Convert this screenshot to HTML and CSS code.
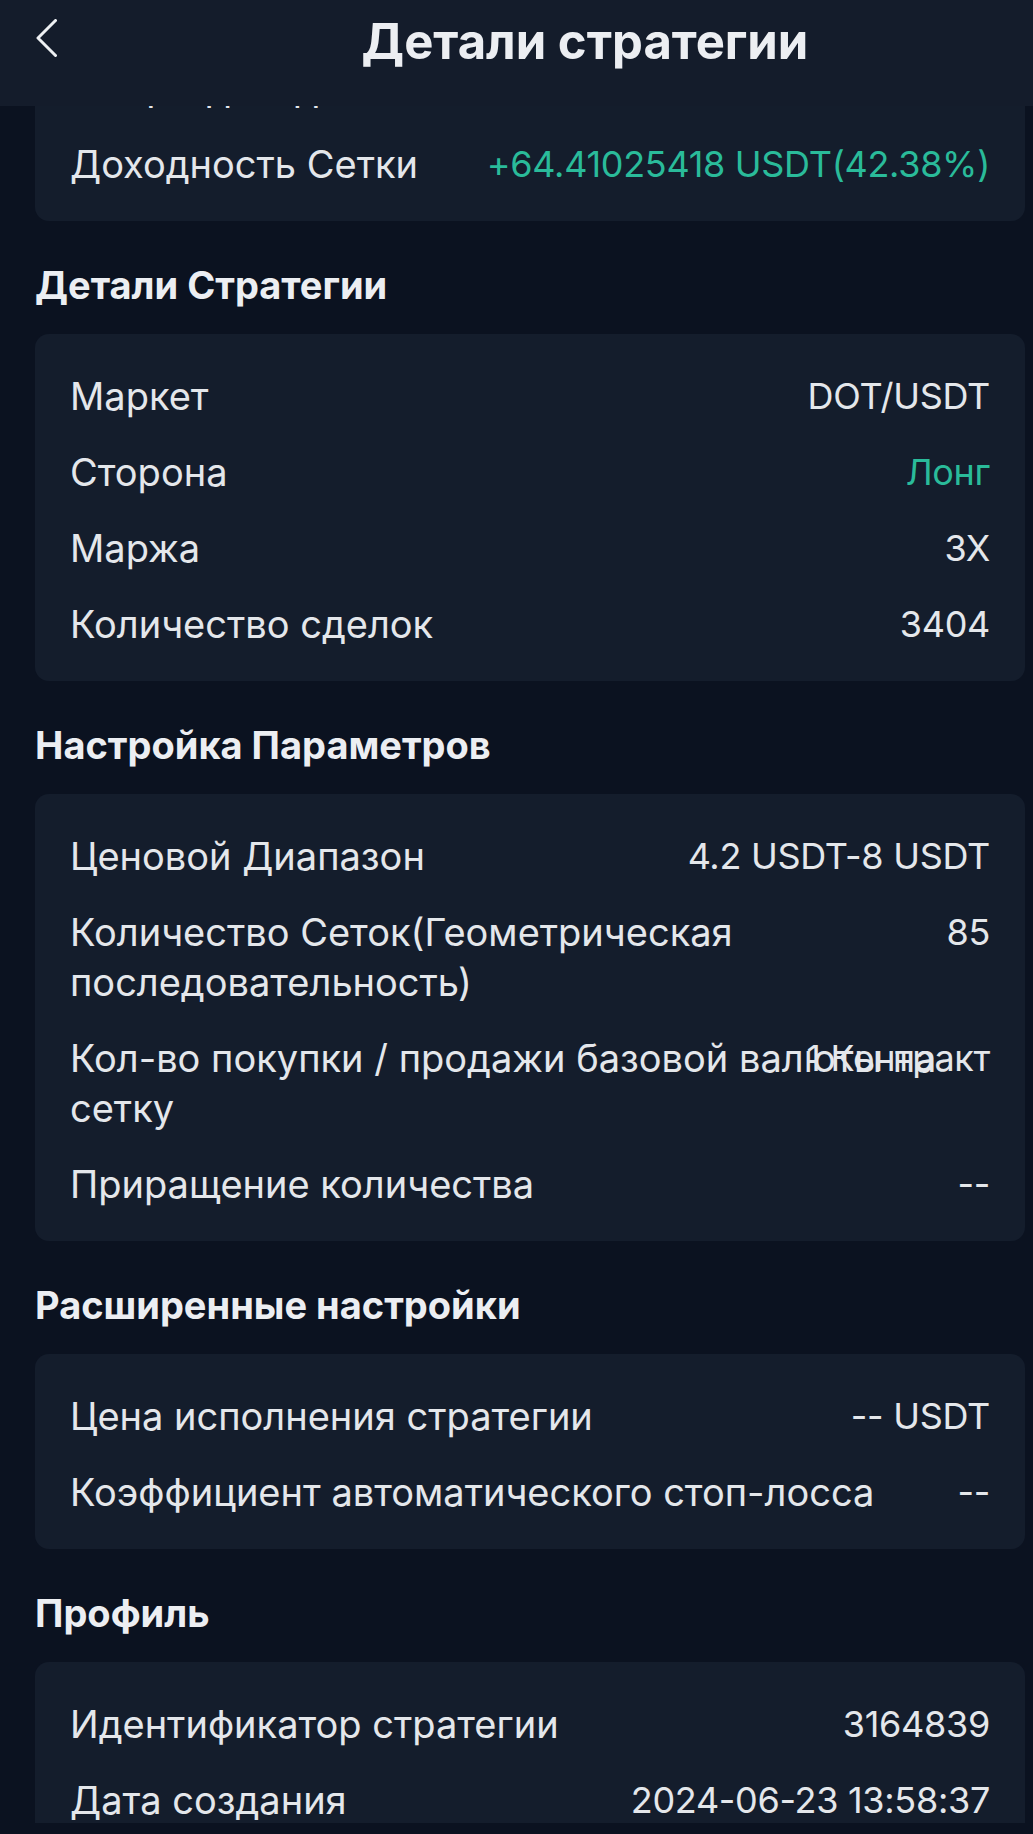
FILE: index.html
```html
<!DOCTYPE html>
<html lang="ru">
<head>
    <meta charset="UTF-8">
    <meta name="viewport" content="width=device-width, initial-scale=1.0">
    <title>Детали стратегии</title>
    <link rel="stylesheet" href="styles.css">
</head>
<body>

    <header class="topbar">
        <button class="back" type="button">
            <svg width="21" height="38" viewBox="0 0 21 38">
                <polyline points="19.5,1.5 2,19 19.5,36.5" fill="none" stroke="#eef0f3" stroke-width="3" stroke-linecap="round" stroke-linejoin="round"/>
            </svg>
        </button>
        <h1 class="title">Детали стратегии</h1>
    </header>

    <main class="content">
        <section class="card card-scrolled">
            <div class="row">
                <span class="label">Общая доходность</span>
                <span class="value green">+151.7 USDT</span>
            </div>
            <div class="row">
                <span class="label">Доходность Сетки</span>
                <span class="value green">+64.41025418 USDT(42.38%)</span>
            </div>
        </section>

        <h2 class="section-title">Детали Стратегии</h2>
        <section class="card">
            <div class="row">
                <span class="label">Маркет</span>
                <span class="value">DOT/USDT</span>
            </div>
            <div class="row">
                <span class="label">Сторона</span>
                <span class="value green">Лонг</span>
            </div>
            <div class="row">
                <span class="label">Маржа</span>
                <span class="value">3X</span>
            </div>
            <div class="row">
                <span class="label">Количество сделок</span>
                <span class="value">3404</span>
            </div>
        </section>

        <h2 class="section-title">Настройка Параметров</h2>
        <section class="card">
            <div class="row">
                <span class="label">Ценовой Диапазон</span>
                <span class="value">4.2 USDT-8 USDT</span>
            </div>
            <div class="row">
                <span class="label">Количество Сеток(Геометрическая последовательность)</span>
                <span class="value">85</span>
            </div>
            <div class="row row-overlap">
                <span class="label">Кол-во покупки / продажи базовой валюты на сетку</span>
                <span class="value">1 Контракт</span>
            </div>
            <div class="row">
                <span class="label">Приращение количества</span>
                <span class="value">--</span>
            </div>
        </section>

        <h2 class="section-title">Расширенные настройки</h2>
        <section class="card">
            <div class="row">
                <span class="label">Цена исполнения стратегии</span>
                <span class="value">-- USDT</span>
            </div>
            <div class="row">
                <span class="label">Коэффициент автоматического стоп-лосса</span>
                <span class="value">--</span>
            </div>
        </section>

        <h2 class="section-title">Профиль</h2>
        <section class="card">
            <div class="row">
                <span class="label">Идентификатор стратегии</span>
                <span class="value">3164839</span>
            </div>
            <div class="row">
                <span class="label">Дата создания</span>
                <span class="value">2024-06-23 13:58:37</span>
            </div>
        </section>
    </main>

    <div class="bottom-strip"></div>

</body>
</html>
```

FILE: styles.css
```css
body {
    margin: 0;
    background-color: #0b1220;
    font-family: Inter, "Noto Sans", sans-serif;
    color: #e4e7eb;
}
.topbar {
    position: sticky;
    top: 0;
    z-index: 2;
    height: 106px;
    box-sizing: border-box;
    display: flex;
    align-items: flex-start;
    padding: 12px 8px 0 36px;
    background-color: #141c2b;
}
.back {
    flex: none;
    width: 21px;
    height: 38px;
    margin-top: 7px;
    padding: 0;
    border: none;
    background: none;
}
.back svg {
    display: block;
}
.title {
    flex: 1;
    margin: 0;
    padding-left: 88px;
    text-align: center;
    font-size: 49px;
    line-height: 60px;
    font-weight: 700;
    color: #eceef2;
}
.content {
    padding: 0 8px 0 35px;
}
.card {
    background-color: #141d2c;
    border-radius: 14px;
    padding: 24px 35px 19px;
}
.card-scrolled {
    margin-top: -80px;
}
.row {
    display: flex;
    justify-content: space-between;
    align-items: flex-start;
    gap: 24px;
    padding: 13px 0;
    font-size: 38px;
    line-height: 50px;
}
.value {
    flex: none;
    text-align: right;
    white-space: nowrap;
    font-size: 36px;
    letter-spacing: -0.3px;
}
.green {
    color: #2abb9a;
}
.row-overlap {
    display: grid;
}
.row-overlap > span {
    grid-area: 1 / 1;
}
.row-overlap .value {
    justify-self: end;
}
.section-title {
    margin: 40px 0 25px;
    font-size: 38px;
    line-height: 48px;
    font-weight: 700;
    color: #eceef2;
}
.bottom-strip {
    position: fixed;
    left: 0;
    right: 0;
    bottom: 0;
    height: 11px;
    background-color: #0b1220;
}
```
